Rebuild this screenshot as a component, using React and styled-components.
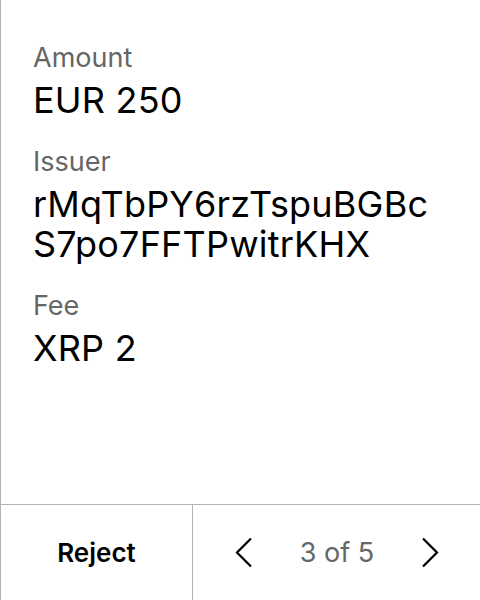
import styled, { createGlobalStyle } from 'styled-components';

const GlobalStyle = createGlobalStyle`
    html, body {
        margin: 0;
        padding: 0;
        background: #ffffff;
    }
    body {
        font-family: Inter, "Noto Sans", sans-serif;
        -webkit-font-smoothing: antialiased;
    }
`;

const Screen = styled.div`
    width: 480px;
    height: 600px;
    display: flex;
    flex-direction: column;
    border-left: 1px solid #b3b3b3;
    box-sizing: border-box;
`;

const Details = styled.div`
    flex: 1;
    padding: 40px 32px 0 32px;
    display: flex;
    flex-direction: column;
`;

const Field = styled.div`
    display: flex;
    flex-direction: column;
    margin-bottom: 24px;
`;

const Label = styled.div`
    font-size: 27px;
    line-height: 36px;
    color: #666666;
`;

const Value = styled.div`
    margin-top: 4px;
    font-size: 36px;
    line-height: 40px;
    letter-spacing: 0.2px;
    color: #000000;
    word-break: break-all;
    max-width: 405px;
`;

const Footer = styled.div`
    height: 95px;
    display: grid;
    grid-template-columns: 192px 1fr;
    border-top: 1px solid #b3b3b3;
`;

const RejectButton = styled.button`
    border: none;
    border-right: 1px solid #b3b3b3;
    background: transparent;
    font-family: Inter, "Noto Sans", sans-serif;
    font-size: 26px;
    font-weight: 600;
    color: #000000;
    padding: 0;
`;

const Pager = styled.div`
    display: flex;
    align-items: center;
    justify-content: space-between;
    padding: 0 40px 0 41px;
`;

const Arrow = styled.button`
    border: none;
    background: transparent;
    padding: 0;
    width: 20px;
    height: 32px;
    display: flex;
    align-items: center;
    justify-content: center;
`;

const PageCount = styled.span`
    font-size: 27px;
    color: #666666;
`;

const Chevron = ({ dir }) => (
    <svg width="18" height="31" viewBox="0 0 18 31" fill="none">
        <path
            d={dir === 'left' ? 'M16 1.5 L2 15.5 L16 29.5' : 'M2 1.5 L16 15.5 L2 29.5'}
            stroke="#000"
            strokeWidth="2.2"
        />
    </svg>
);

const fields = [
    { label: 'Amount', value: 'EUR 250' },
    { label: 'Issuer', value: 'rMqTbPY6rzTspuBGBcS7po7FFTPwitrKHX' },
    { label: 'Fee', value: 'XRP 2' },
];

const App = () => {
    return (
        <>
            <GlobalStyle />
            <Screen>
                <Details>
                    {fields.map((f) => (
                        <Field key={f.label}>
                            <Label>{f.label}</Label>
                            <Value>{f.value}</Value>
                        </Field>
                    ))}
                </Details>
                <Footer>
                    <RejectButton>Reject</RejectButton>
                    <Pager>
                        <Arrow><Chevron dir="left" /></Arrow>
                        <PageCount>3 of 5</PageCount>
                        <Arrow><Chevron dir="right" /></Arrow>
                    </Pager>
                </Footer>
            </Screen>
        </>
    );
};

export default App;
